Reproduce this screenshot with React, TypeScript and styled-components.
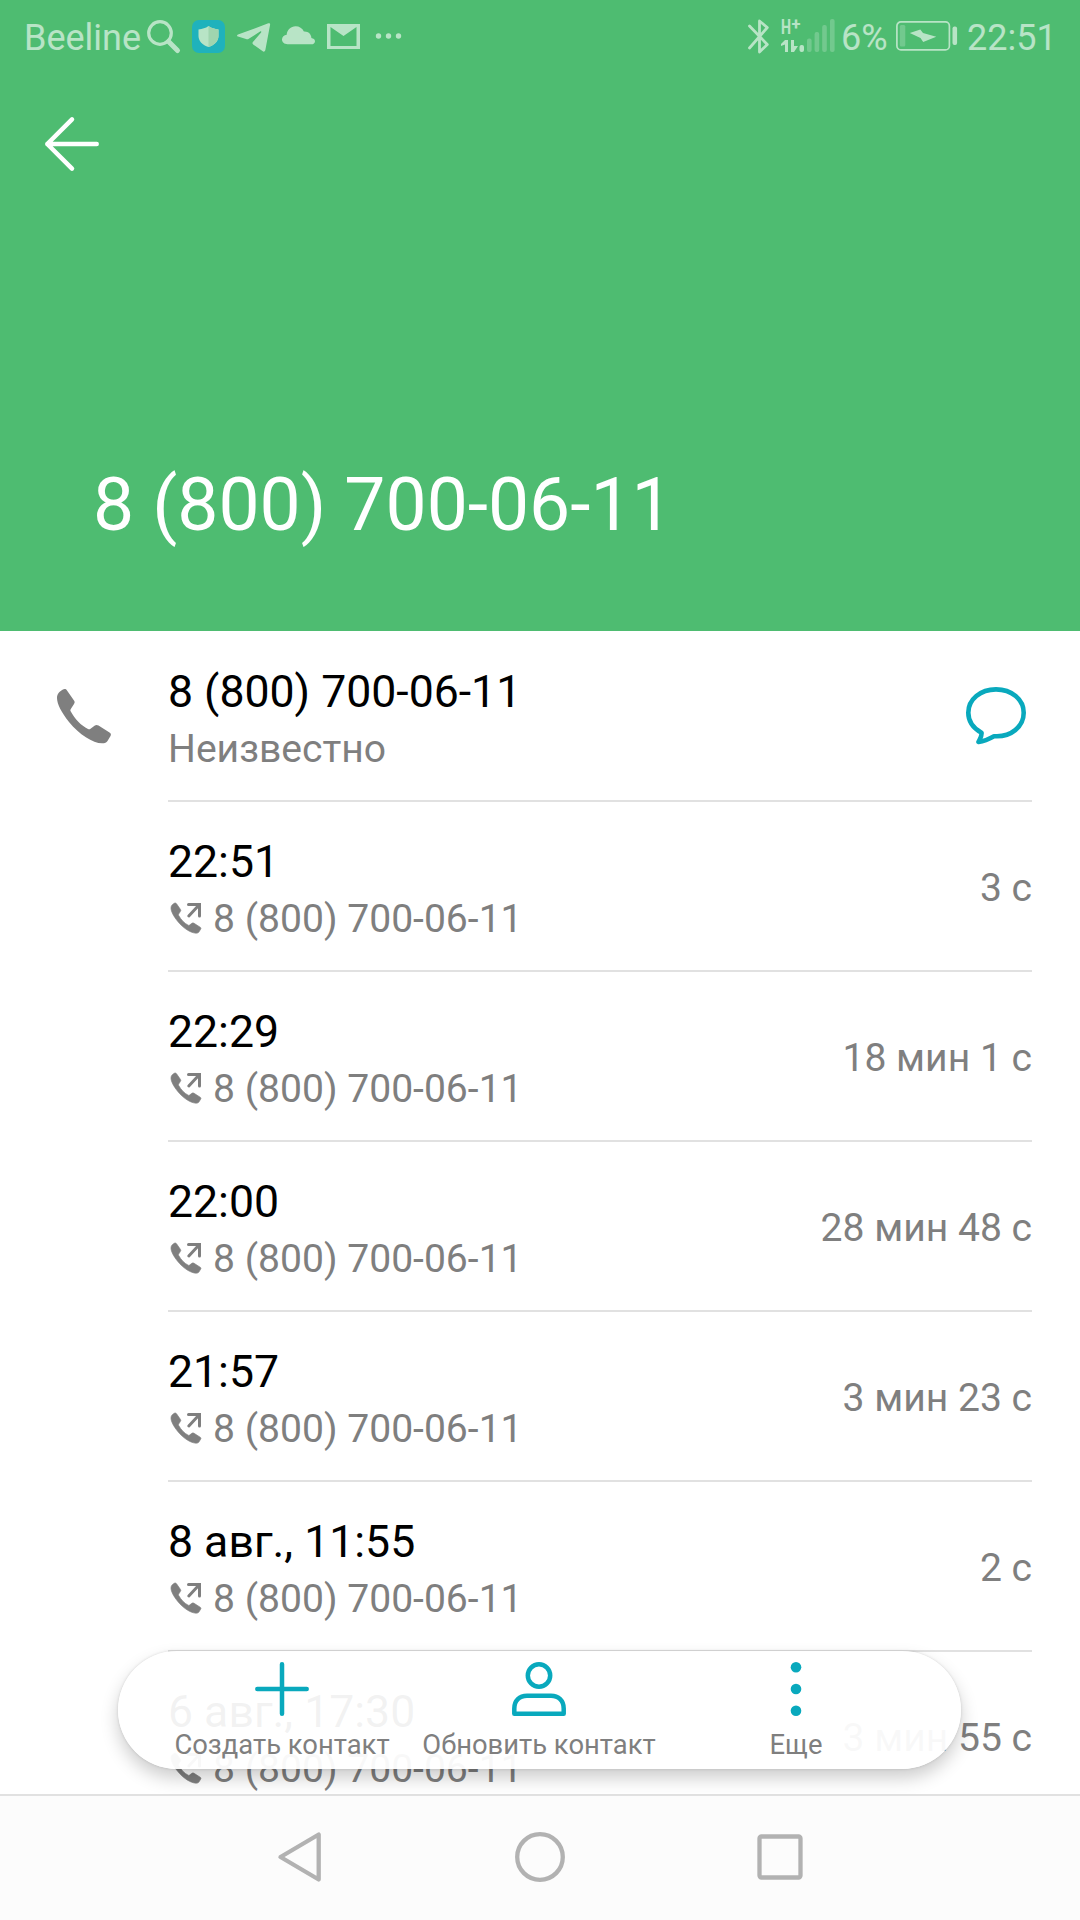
import React from "react";
import styled, { createGlobalStyle } from "styled-components";

const TEAL = "#09a9bd";
const GREY = "#7f7f7f";

const GlobalStyle = createGlobalStyle`
  * { box-sizing: border-box; }
  body { margin: 0; background: #fff; font-family: Roboto, "Noto Sans", sans-serif; }
  svg { display: block; flex: none; overflow: visible; }
`;

const Screen = styled.div`
  position: relative;
  display: flex;
  flex-direction: column;
  width: 1080px;
  height: 1920px;
  overflow: hidden;
  background: #fff;
`;

const Header = styled.header`
  display: flex;
  flex-direction: column;
  height: 631px;
  flex: none;
  background: #4ebc71;
  color: #fff;
`;

const StatusBar = styled.div`
  display: flex;
  justify-content: space-between;
  height: 72px;
  padding: 0 28px 0 24px;
  opacity: 0.6;
`;

const StatusGroup = styled.div`
  display: flex;
  align-items: center;
`;

const StatusText = styled.span<{ $width: number; $gap?: number }>`
  width: ${(p) => p.$width}px;
  margin-left: ${(p) => p.$gap ?? 0}px;
  font-size: 36px;
  line-height: 44px;
  padding-top: 4px;
  white-space: nowrap;
`;

const StatusIcons = styled.div<{ $gap: number }>`
  display: flex;
  gap: ${(p) => p.$gap}px;
`;

const BackButton = styled.button`
  width: 144px;
  height: 144px;
  padding: 0 0 0 45px;
  border: 0;
  background: none;
  display: flex;
  align-items: center;
`;

const HeaderTitle = styled.h1`
  margin: auto 0 83px;
  padding-left: 93px;
  font-size: 73.2px;
  font-weight: 400;
  line-height: 86px;
`;

const List = styled.main`
  height: 1163px;
  flex: none;
  overflow: hidden;
`;

const Row = styled.section<{ $first?: boolean }>`
  display: flex;
  height: ${(p) => (p.$first ? 171 : 170)}px;
  padding-right: 48px;
`;

const Leading = styled.div`
  width: 168px;
  padding: 58px 0 0 57px;
`;

const RowBody = styled.div<{ $first?: boolean }>`
  flex: 1;
  display: flex;
  justify-content: space-between;
  padding-top: ${(p) => (p.$first ? 1 : 0)}px;
  border-bottom: 2px solid #e1e1e1;
`;

const Lines = styled.div`
  display: flex;
  flex-direction: column;
  gap: 8px;
  padding-top: 34px;
`;

const Primary = styled.div`
  font-size: 44.6px;
  line-height: 52px;
  color: #000;
`;

const Secondary = styled.div`
  display: flex;
  align-items: center;
  gap: 11px;
  font-size: 39.1px;
  line-height: 46px;
  color: ${GREY};
`;

const CallIconBox = styled.span`
  padding: 0 0 2px 3px;
`;

const Duration = styled.div`
  align-self: center;
  padding-top: 4px;
  font-size: 39.1px;
  line-height: 46px;
  color: ${GREY};
`;

const MessageButton = styled.button`
  align-self: flex-start;
  padding: 55px 6px 0 0;
  border: 0;
  background: none;
`;

const ActionPill = styled.div`
  position: absolute;
  left: 118px;
  top: 1651px;
  width: 843px;
  height: 118px;
  border-radius: 59px;
  padding: 0 37px 0 35px;
  display: flex;
  background: rgba(255, 255, 255, 0.95);
  box-shadow: 0 9px 18px rgba(0, 0, 0, 0.2), 0 0 3px rgba(0, 0, 0, 0.14);
`;

const Action = styled.button`
  flex: 1;
  display: flex;
  flex-direction: column;
  align-items: center;
  padding: 11px 0 0;
  border: 0;
  background: none;
  font-family: inherit;
  font-size: 27.4px;
  line-height: 32px;
  color: ${GREY};
  white-space: nowrap;
`;

const ActionLabel = styled.span`
  margin-top: 13px;
  padding-left: 1px;
`;

const NavBar = styled.nav`
  flex: 1;
  display: flex;
  justify-content: center;
  gap: 180px;
  padding-top: 31px;
  border-top: 2px solid #e1e1e1;
  background: #fcfcfc;
`;

const NavButton = styled.button`
  width: 60px;
  height: 60px;
  padding: 0;
  border: 0;
  background: none;
`;

const SearchIcon = () => (
  <svg width="33" height="33" fill="none" stroke="#fff">
    <circle cx="13" cy="13" r="11.3" strokeWidth="3.2" />
    <path d="M21.5 21.5L30.5 30.5" strokeWidth="5" strokeLinecap="round" />
  </svg>
);

const ShieldIcon = () => (
  <svg width="33" height="33">
    <rect width="33" height="33" rx="7" fill="#00adef" />
    <path d="M16.5 6c3 2.2 6 3 10 3.4v6.6c0 5-4 9-10 11-6-2-10-6-10-11V9.4C10.500 9 13.500 8.200 16.500 6z" fill="#fff" />
    <path d="M16.500 6c3 2.200 6 3 10 3.400v6.600c0 5-4 9-10 11z" fill="#d5e6d9" />
  </svg>
);

const TelegramIcon = () => (
  <svg width="33" height="33" fill="#fff">
    <path d="M31.300 3.300c1.200-.5 2 .2 1.800 1.500l-4.700 25c-.3 1.800-1.500 2.400-3 1.300l-9.200-6.700c-1-.8-1-1.700-.1-2.600l8-9.300c.6-.9 0-1.500-1-.9L11.800 18.700c-.9.600-1.800.6-2.800.3L1 16.600c-1.300-.5-1.300-1.300 0-2z" />
  </svg>
);

const CloudIcon = () => (
  <svg width="33" height="33" fill="#fff">
    <path d="M5.500 24.300C2.300 24.300 0 22.300 0 19.600c0-2.600 2-4.600 4.700-4.800C4.900 10 8.800 6.300 13.600 6.300c3.700 0 6.800 2 8.300 5.300 4.200-.4 7.300 2.600 7.500 6.300 2 .3 3.600 1.500 3.600 3.300 0 1.900-1.600 3.100-3.700 3.100z" />
  </svg>
);

const MailIcon = () => (
  <svg width="33" height="33" fill="#fff" fillRule="evenodd">
    <path d="M0 4H33V29H0zM3.500 7V26H29.500V7L16.500 16z" />
  </svg>
);

const MoreIcon = () => (
  <svg width="33" height="33" fill="#fff">
    <circle cx="6.500" cy="16" r="2.700" />
    <circle cx="16.500" cy="16" r="2.700" />
    <circle cx="26.500" cy="16" r="2.700" />
  </svg>
);

const BluetoothIcon = () => (
  <svg width="22" height="36" fill="none" stroke="#fff" strokeWidth="2.800" strokeLinecap="round" strokeLinejoin="round">
    <path d="M1.500 8L19.300 26.500L11.500 34V3L19.300 9.500L1.500 30" />
  </svg>
);

const NetworkIcon = () => (
  <svg width="54" height="36" fill="#fff">
    <text x="0" y="16" fontSize="21" fontWeight="700" textLength="10" lengthAdjust="spacingAndGlyphs">H</text>
    <text x="10.500" y="11.500" fontSize="17" fontWeight="700" textLength="9" lengthAdjust="spacingAndGlyphs">+</text>
    <path d="M4 22H7V34H4V26.500L0 28V26zM10 22H13V28H17L13 34H10z" />
    <rect x="18.500" y="27" width="4.500" height="7" rx="2" />
    <g fillOpacity="0.35">
      <rect x="26" y="20.500" width="4.600" height="13.500" rx="2" />
      <rect x="33.600" y="14" width="4.600" height="20" rx="2" />
      <rect x="41.200" y="7" width="4.600" height="27" rx="2" />
      <rect x="49" y="1" width="4.600" height="33" rx="2" />
    </g>
  </svg>
);

const BatteryIcon = () => (
  <svg width="62" height="30" fill="#fff">
    <rect x="0.900" y="0.900" width="52.500" height="28" rx="4" fill="none" stroke="#fff" strokeWidth="1.700" />
    <rect x="3.800" y="4" width="5.500" height="21.500" rx="1.500" fillOpacity="0.350" />
    <rect x="56.500" y="5.500" width="4.600" height="18.500" rx="2" />
    <path d="M13.800 12L24.300 8.500L27 12L40.300 15.800L27.200 21L24.500 17z" />
  </svg>
);

const BackIcon = () => (
  <svg width="54" height="54" fill="none" stroke="#fff" strokeWidth="4.500" strokeLinecap="round" strokeLinejoin="round">
    <path d="M27 2.300L2.300 27L27 51.700M2.300 27H51.700" />
  </svg>
);

const HANDSET =
  "M5.500 .8C7.500 -.4 9 0 10 1.500L17 11.500C18 12.800 17.800 13.700 17 15L13.800 20C13.200 21 13.200 21.500 13.800 22.500C18 30 24 36.500 31 40C32 40.500 32.700 40.400 33.500 39.800L37.500 36.700C39 35.600 40 35.700 41.500 36.600L52.500 43.500C54 44.500 54.300 45.500 53.500 47L50.500 52C49.500 53.700 48 54.300 45 54.300C36 54.300 22 45.500 12 33C4.500 23.500 0 15 0 9C0 5 2.500 2.500 5.500 .8z";

const PhoneIcon = () => (
  <svg width="55" height="55" viewBox="0 0 55 55" fill={GREY}>
    <path d={HANDSET} />
  </svg>
);

const OutgoingIcon = () => (
  <svg width="31" height="31" viewBox="0 0 31 31" fill={GREY}>
    <path d={HANDSET} transform="scale(0.555)" stroke={GREY} strokeWidth="1.200" />
    <path d="M17.500 1.500H28.500V13M28 2L17.800 13" fill="none" stroke={GREY} strokeWidth="3" strokeLinecap="round" />
  </svg>
);

const MessageIcon = () => (
  <svg width="60" height="58" fill="none" stroke={TEAL} strokeWidth="4.600" strokeLinejoin="round">
    <path d="M28 49.200C45 50.500 57.700 39.500 57.700 25.700C57.700 12.500 45.500 2.400 30 2.400C14.500 2.400 2.300 12.500 2.300 25.700C2.300 34 7 41 15.500 45.700C16 49 14 51.500 12.500 55C19 54 23 52 28 49.200z" />
  </svg>
);

const PlusIcon = () => (
  <svg width="54" height="54" stroke={TEAL} strokeWidth="4.500" strokeLinecap="round">
    <path d="M27 2.300V51.700M2.300 27H51.700" />
  </svg>
);

const PersonIcon = () => (
  <svg width="54" height="54" fill="none" stroke={TEAL} strokeWidth="4.500" strokeLinejoin="round">
    <circle cx="27" cy="13.500" r="11.200" />
    <path d="M2.300 51.700V46.500C2.300 38.500 7.500 33.700 15 33.700H39C46.500 33.700 51.700 38.500 51.700 46.500V51.700z" />
  </svg>
);

const DotsIcon = () => (
  <svg width="54" height="54" fill={TEAL}>
    <circle cx="27" cy="5.300" r="5.300" />
    <circle cx="27" cy="27" r="5.300" />
    <circle cx="27" cy="48.700" r="5.300" />
  </svg>
);

const NavShape = ({ children }: { children: React.ReactNode }) => (
  <svg width="60" height="60" fill="none" stroke="#b2b2b2" strokeWidth="4.300" strokeLinejoin="round">
    {children}
  </svg>
);

const NUMBER = "8 (800) 700-06-11";

const calls = [
  { time: "22:51", duration: "3 с" },
  { time: "22:29", duration: "18 мин 1 с" },
  { time: "22:00", duration: "28 мин 48 с" },
  { time: "21:57", duration: "3 мин 23 с" },
  { time: "8 авг., 11:55", duration: "2 с" },
  { time: "6 авг., 17:30", duration: "3 мин 55 с" },
];

const actions = [
  { label: "Создать контакт", icon: <PlusIcon /> },
  { label: "Обновить контакт", icon: <PersonIcon /> },
  { label: "Еще", icon: <DotsIcon /> },
];

const CallRow = ({ time, duration }: { time: string; duration: string }) => (
  <Row>
    <Leading />
    <RowBody>
      <Lines>
        <Primary>{time}</Primary>
        <Secondary>
          <CallIconBox>
            <OutgoingIcon />
          </CallIconBox>
          {NUMBER}
        </Secondary>
      </Lines>
      <Duration>{duration}</Duration>
    </RowBody>
  </Row>
);

export default function App() {
  return (
    <Screen>
      <GlobalStyle />
      <Header>
        <StatusBar>
          <StatusGroup>
            <StatusText $width={123}>Beeline</StatusText>
            <StatusIcons $gap={12}>
              <SearchIcon />
              <ShieldIcon />
              <TelegramIcon />
              <CloudIcon />
              <MailIcon />
              <MoreIcon />
            </StatusIcons>
          </StatusGroup>
          <StatusGroup>
            <StatusIcons $gap={11}>
              <BluetoothIcon />
              <NetworkIcon />
            </StatusIcons>
            <StatusText $width={55} $gap={6}>6%</StatusText>
            <BatteryIcon />
            <StatusText $width={85} $gap={9}>22:51</StatusText>
          </StatusGroup>
        </StatusBar>
        <BackButton aria-label="Назад">
          <BackIcon />
        </BackButton>
        <HeaderTitle>{NUMBER}</HeaderTitle>
      </Header>

      <List>
        <Row $first>
          <Leading>
            <PhoneIcon />
          </Leading>
          <RowBody $first>
            <Lines>
              <Primary>{NUMBER}</Primary>
              <Secondary>Неизвестно</Secondary>
            </Lines>
            <MessageButton aria-label="Сообщение">
              <MessageIcon />
            </MessageButton>
          </RowBody>
        </Row>
        {calls.map((c) => (
          <CallRow key={c.time} {...c} />
        ))}
      </List>

      <ActionPill>
        {actions.map((a) => (
          <Action key={a.label}>
            {a.icon}
            <ActionLabel>{a.label}</ActionLabel>
          </Action>
        ))}
      </ActionPill>

      <NavBar>
        <NavButton aria-label="Назад">
          <NavShape>
            <path d="M48.700 7.500V52.500L10.500 30z" />
          </NavShape>
        </NavButton>
        <NavButton aria-label="Домой">
          <NavShape>
            <circle cx="30" cy="30" r="22.800" />
          </NavShape>
        </NavButton>
        <NavButton aria-label="Недавние">
          <NavShape>
            <rect x="9.500" y="9.500" width="41" height="41" rx="2" />
          </NavShape>
        </NavButton>
      </NavBar>
    </Screen>
  );
}
